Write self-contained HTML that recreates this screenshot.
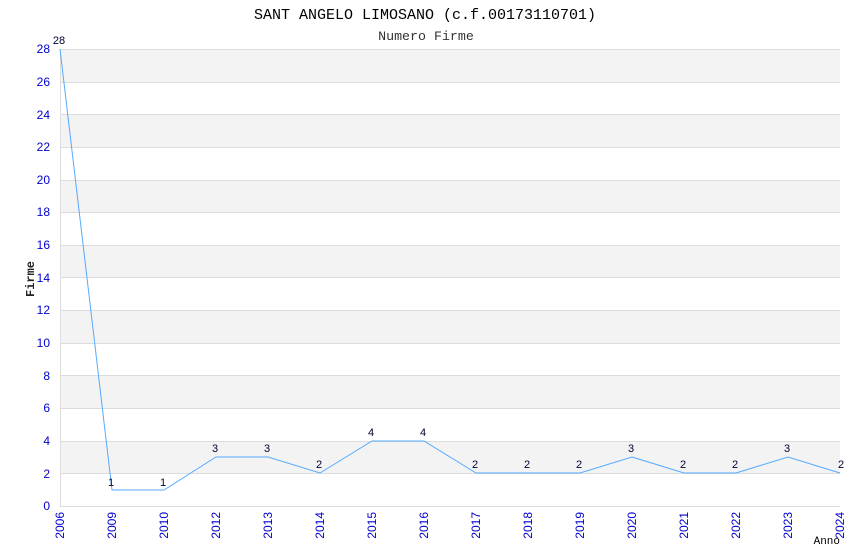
<!DOCTYPE html>
<html><head><style>body{margin:0;background:#fff}svg{display:block}</style></head><body>
<svg width="850" height="550" xmlns="http://www.w3.org/2000/svg" font-family="Liberation Sans, sans-serif">
<rect width="850" height="550" fill="#fff"/>
<g fill="#f3f3f3">
<rect x="60" y="49" width="780" height="33"/><rect x="60" y="114" width="780" height="33"/>
<rect x="60" y="180" width="780" height="32"/><rect x="60" y="245" width="780" height="32"/>
<rect x="60" y="310" width="780" height="33"/><rect x="60" y="375" width="780" height="33"/>
<rect x="60" y="441" width="780" height="32"/>
</g>
<g stroke="#dcdcdc" stroke-width="1">
<line x1="60" x2="840" y1="49.5" y2="49.5"/><line x1="60" x2="840" y1="82.5" y2="82.5"/><line x1="60" x2="840" y1="114.5" y2="114.5"/><line x1="60" x2="840" y1="147.5" y2="147.5"/><line x1="60" x2="840" y1="180.5" y2="180.5"/><line x1="60" x2="840" y1="212.5" y2="212.5"/><line x1="60" x2="840" y1="245.5" y2="245.5"/><line x1="60" x2="840" y1="277.5" y2="277.5"/><line x1="60" x2="840" y1="310.5" y2="310.5"/><line x1="60" x2="840" y1="343.5" y2="343.5"/><line x1="60" x2="840" y1="375.5" y2="375.5"/><line x1="60" x2="840" y1="408.5" y2="408.5"/><line x1="60" x2="840" y1="441.5" y2="441.5"/><line x1="60" x2="840" y1="473.5" y2="473.5"/>
<line x1="60.5" x2="60.5" y1="49" y2="506"/><line x1="60" x2="840" y1="506.5" y2="506.5"/>
</g>
<text x="425" y="19" text-anchor="middle" font-size="15" font-family="Liberation Mono, monospace" fill="#000">SANT ANGELO LIMOSANO (c.f.00173110701)</text>
<text x="426" y="40" text-anchor="middle" font-size="13.3" font-family="Liberation Mono, monospace" fill="#333">Numero Firme</text>
<g font-size="12" fill="#0000cc" text-anchor="end">
<text x="50" y="510">0</text><text x="50" y="478">2</text><text x="50" y="445">4</text><text x="50" y="412">6</text><text x="50" y="380">8</text><text x="50" y="347">10</text><text x="50" y="314">12</text><text x="50" y="282">14</text><text x="50" y="249">16</text><text x="50" y="216">18</text><text x="50" y="184">20</text><text x="50" y="151">22</text><text x="50" y="119">24</text><text x="50" y="86">26</text><text x="50" y="53">28</text>
</g>
<text transform="translate(34,279) rotate(-90)" text-anchor="middle" font-size="12" font-weight="bold" font-family="Liberation Mono, monospace" fill="#222">Firme</text>
<text x="840" y="544" text-anchor="end" font-size="11" font-family="Liberation Mono, monospace" fill="#000">Anno</text>
<g font-size="12" fill="#0000cc" text-anchor="end">
<text transform="translate(64,512) rotate(-90)">2006</text>
<text transform="translate(116,512) rotate(-90)">2009</text>
<text transform="translate(168,512) rotate(-90)">2010</text>
<text transform="translate(220,512) rotate(-90)">2012</text>
<text transform="translate(272,512) rotate(-90)">2013</text>
<text transform="translate(324,512) rotate(-90)">2014</text>
<text transform="translate(376,512) rotate(-90)">2015</text>
<text transform="translate(428,512) rotate(-90)">2016</text>
<text transform="translate(480,512) rotate(-90)">2017</text>
<text transform="translate(532,512) rotate(-90)">2018</text>
<text transform="translate(584,512) rotate(-90)">2019</text>
<text transform="translate(636,512) rotate(-90)">2020</text>
<text transform="translate(688,512) rotate(-90)">2021</text>
<text transform="translate(740,512) rotate(-90)">2022</text>
<text transform="translate(792,512) rotate(-90)">2023</text>
<text transform="translate(844,512) rotate(-90)">2024</text>
</g>
<polyline fill="none" stroke="#55aaff" stroke-width="1" points="60,49 112,490 164,490 216,457 268,457 320,473 372,441 424,441 476,473 528,473 580,473 632,457 684,473 736,473 788,457 840,473"/>
<g font-size="11" fill="#000033" text-anchor="middle">
<text x="59" y="44">28</text><text x="111" y="486">1</text><text x="163" y="486">1</text><text x="215" y="452">3</text><text x="267" y="452">3</text><text x="319" y="468">2</text><text x="371" y="436">4</text><text x="423" y="436">4</text><text x="475" y="468">2</text><text x="527" y="468">2</text><text x="579" y="468">2</text><text x="631" y="452">3</text><text x="683" y="468">2</text><text x="735" y="468">2</text><text x="787" y="452">3</text><text x="841" y="468">2</text>
</g>
</svg>
</body></html>
